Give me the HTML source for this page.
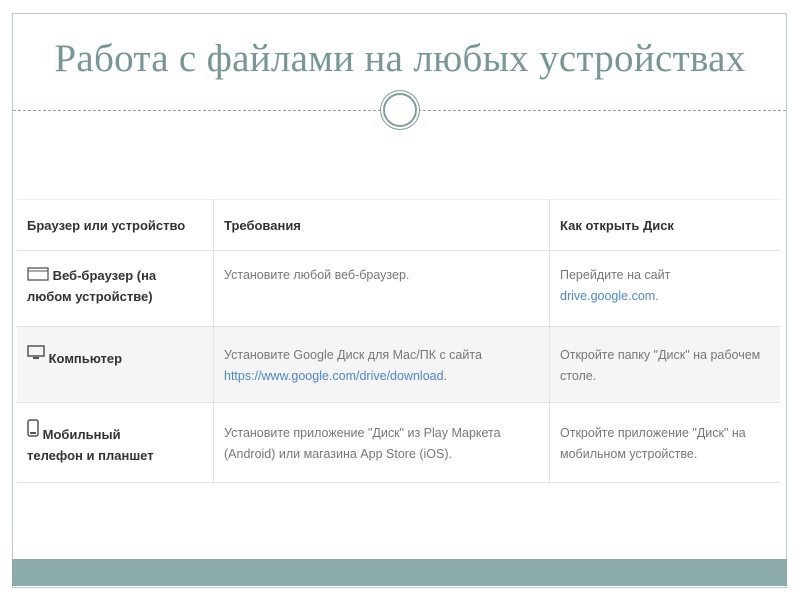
<!DOCTYPE html>
<html><head><meta charset="utf-8"><style>
body{margin:0;width:800px;height:600px;background:#fff;position:relative;overflow:hidden;font-family:"Liberation Sans",sans-serif}
.frame{position:absolute;left:12px;top:13px;width:773px;height:573px;border:1px solid #b9cccc}
.band{position:absolute;left:12px;top:559px;width:775px;height:27px;background:#8cabab}
.title{position:absolute;left:0;width:800px;top:36px;text-align:center;font-family:"Liberation Serif",serif;font-size:39px;color:#779797;letter-spacing:0.3px}
.dash{position:absolute;left:13px;width:773px;top:110px;border-top:1px dashed #8fa9a9}
.circ{position:absolute;left:383px;top:93px;width:30px;height:30px;border-radius:50%;border:2px solid #7f9d9d;background:#fff;box-shadow:0 0 0 2px #fff,0 0 0 3px #7f9d9d}
table{position:absolute;left:17px;top:199px;width:763px;border-collapse:collapse;font-size:12.5px}
td{border:1px solid #e2e2e2;vertical-align:top;padding:0 10px;color:#777;line-height:21px}
td:first-child{border-left:none;color:#333;font-weight:bold;font-size:13px}
td:last-child{border-right:none}
tr.h td{color:#333;font-weight:bold;height:50px;vertical-align:middle;font-size:13px;border-top:1px solid #f0f0f0}
tr.g td{background:#f5f5f5}
a{color:#4a86d8;text-decoration:none}
</style></head><body>
<div class="frame"></div>
<div class="band"></div>
<div class="title">Работа с файлами на любых устройствах</div>
<div class="dash"></div>
<div class="circ"></div>
<table>
<tr class="h"><td style="width:176px">Браузер или устройство</td><td style="width:315px">Требования</td><td>Как открыть Диск</td></tr>
<tr style="height:76px"><td style="padding-top:14px"><svg width="22" height="14" style="vertical-align:-1px"><rect x="1" y="1" width="20" height="12" fill="none" stroke="#555" stroke-width="1.3"/><line x1="1" y1="4" x2="21" y2="4" stroke="#555"/></svg> Веб-браузер (на<br>любом устройстве)</td><td style="padding-top:14px">Установите любой веб-браузер.</td><td style="padding-top:14px">Перейдите на сайт<br><a>drive.google.com</a>.</td></tr>
<tr class="g" style="height:76px"><td style="padding-top:18px"><svg width="18" height="16" style="vertical-align:2px"><rect x="1" y="1" width="16" height="10" fill="none" stroke="#555" stroke-width="1.5"/><rect x="6" y="12" width="6" height="2" fill="#555"/></svg> Компьютер</td><td style="padding-top:18px">Установите Google Диск для Mac/ПК с сайта<br><a>https://www.google.com/drive/download</a>.</td><td style="padding-top:18px">Откройте папку "Диск" на рабочем<br>столе.</td></tr>
<tr style="height:80px"><td style="padding-top:16px"><svg width="12" height="18" style="vertical-align:2px"><rect x="1" y="1" width="10" height="16" rx="2" fill="none" stroke="#555" stroke-width="1.5"/><rect x="3" y="13" width="6" height="2" fill="#555"/></svg> Мобильный<br>телефон и планшет</td><td style="padding-top:20px">Установите приложение "Диск" из Play Маркета<br>(Android) или магазина App Store (iOS).</td><td style="padding-top:20px">Откройте приложение "Диск" на<br>мобильном устройстве.</td></tr>
</table>
</body></html>
